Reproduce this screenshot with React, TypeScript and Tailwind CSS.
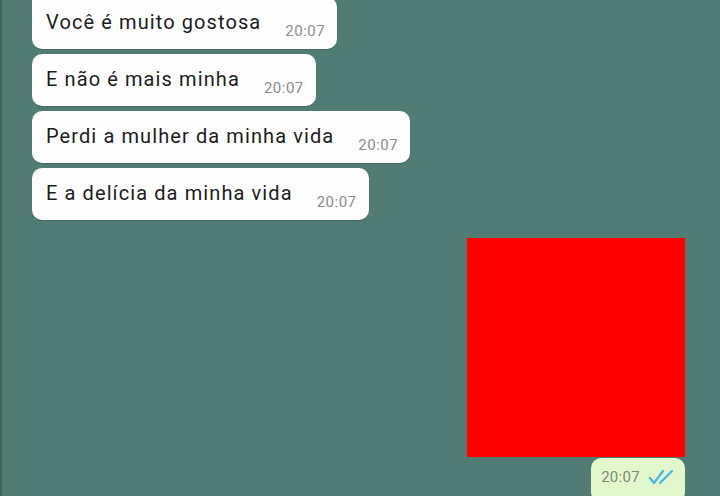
import React from "react";

const msgs = [
  "Você é muito gostosa",
  "E não é mais minha",
  "Perdi a mulher da minha vida",
  "E a delícia da minha vida",
];

function Bubble({ text, first }: { text: string; first?: boolean }) {
  return (
    <div
      className={`relative flex items-end self-start bg-[#fdfdfd] rounded-[10px] h-[52px] pl-[14px] pr-[12px] pb-[10px] shadow-[0_1px_1px_rgba(0,0,0,0.15)] ${first ? "rounded-tl-none" : ""}`}
    >
      <span className="text-[20px] tracking-[1.1px] leading-[24px] mb-[5px] text-[#1c1c1c]">{text}</span>
      <span className="ml-[24px] text-[15px] tracking-[0.5px] leading-[16px] text-[#8c8c8c]">20:07</span>
    </div>
  );
}

export default function App() {
  return (
    <div
      className="w-[720px] h-[496px] overflow-hidden bg-[#517c74] border-l-[2px] border-[#3f625b] flex flex-col"
      style={{ fontFamily: "Roboto, 'Open Sans', sans-serif" }}
    >
      <div className="flex flex-col gap-[5px] pl-[30px] mt-[-3px]">
        {msgs.map((m, i) => (
          <Bubble key={i} text={m} first={i === 0} />
        ))}
      </div>
      <div className="flex flex-col items-end pr-[35px] mt-[18px]">
        <div className="w-[218px] h-[219px] bg-[#ff0000]" />
        <div className="flex items-center gap-[8px] bg-[#e3f7cd] rounded-[10px] h-[44px] pl-[10px] pr-[9px] pb-[6px] mt-[1px]">
          <span className="text-[15px] tracking-[0.3px] text-[#7f8a78]">20:07</span>
          <svg width="28" height="18" viewBox="0 0 28 18" fill="none" stroke="#4fb9e3" strokeWidth="2.4" strokeLinecap="round" strokeLinejoin="round">
            <path d="M2 10 L6 15 L15 3" />
            <path d="M12 15 L24 3" />
          </svg>
        </div>
      </div>
    </div>
  );
}
